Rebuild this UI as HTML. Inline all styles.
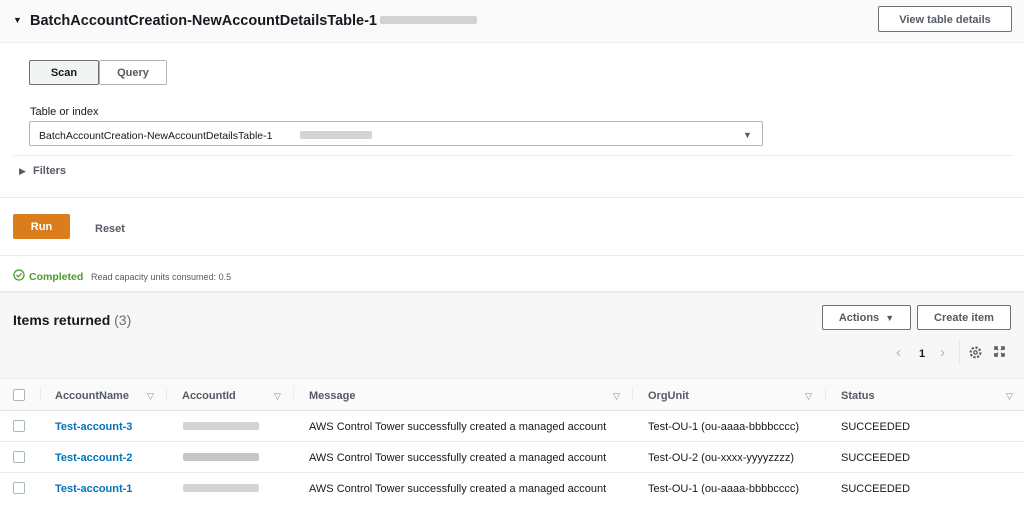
<!DOCTYPE html>
<html><head><style>
body{margin:0;width:1024px;height:518px;position:relative;overflow:hidden;background:#fff;font-family:"Liberation Sans",sans-serif;color:#16191f;font-size:11px}
.a{position:absolute;white-space:nowrap}
.t{margin-top:2px}
.b{font-weight:bold}
.btn{position:absolute;border:1px solid #687078;border-radius:2px;background:#fff;font-weight:bold;font-size:11px;color:#545b64;text-align:center;box-sizing:border-box;padding-top:2px}
.hl{position:absolute;height:1px;background:#eaeded}
.blur{position:absolute;background:#c8c8c8;height:8px;border-radius:2px;opacity:.8}
.cb{position:absolute;width:10px;height:10px;border:1px solid #aab7b8;border-radius:2px;background:#fff;left:13px}
.tri{color:#879596;font-size:9px}
.vd{position:absolute;width:1px;height:14px;background:#eaeded;top:387px}
</style></head><body>
<div class="a" style="left:0;top:0;width:1024px;height:42px;background:#fafafa"></div>
<div class="hl" style="left:0;top:42px;width:1024px"></div>
<div class="a t" style="left:13px;top:13px;font-size:9px">▼</div>
<div class="a b t" style="left:30px;top:11px;font-size:14.5px">BatchAccountCreation-NewAccountDetailsTable-1</div>
<div class="blur" style="left:380px;top:16px;width:97px"></div>
<div class="btn" style="left:878px;top:6px;width:134px;height:26px;line-height:22px">View table details</div>

<div class="btn" style="left:29px;top:60px;width:70px;height:25px;line-height:21px;background:#f2f3f3;color:#16191f">Scan</div>
<div class="btn" style="left:99px;top:60px;width:68px;height:25px;line-height:21px;border-color:#aab7b8">Query</div>
<div class="a t" style="left:30px;top:104px;font-size:11px">Table or index</div>
<div class="a" style="left:29px;top:121px;width:734px;height:25px;border:1px solid #aab7b8;border-radius:2px;box-sizing:border-box"></div>
<div class="a t" style="left:39px;top:128px;font-size:10.5px">BatchAccountCreation-NewAccountDetailsTable-1</div>
<div class="blur" style="left:300px;top:131px;width:72px"></div>
<div class="a t" style="left:743px;top:128px;font-size:9px;color:#545b64">▼</div>
<div class="hl" style="left:13px;top:155px;width:1000px"></div>
<div class="a t" style="left:19px;top:164px;font-size:9px;color:#545b64">▶</div>
<div class="a b t" style="left:33px;top:163px;color:#545b64">Filters</div>
<div class="hl" style="left:0;top:197px;width:1024px"></div>

<div class="a" style="left:13px;top:214px;width:57px;height:25px;background:#d97d1d;border-radius:2px;color:#fff;font-weight:bold;text-align:center;line-height:27px">Run</div>
<div class="a b t" style="left:95px;top:221px;color:#545b64">Reset</div>
<div class="hl" style="left:0;top:255px;width:1024px"></div>
<svg class="a" style="left:13px;top:269px" width="12" height="12" viewBox="0 0 12 12"><circle cx="6" cy="6" r="5" fill="none" stroke="#4d9a2a" stroke-width="1.3"/><path d="M3.5 6l1.8 1.8L8.6 4.3" fill="none" stroke="#4d9a2a" stroke-width="1.3"/></svg>
<div class="a b t" style="left:29px;top:269px;color:#4d9a2a;font-size:10.5px">Completed</div>
<div class="a t" style="left:91px;top:270px;color:#545b64;font-size:9px">Read capacity units consumed: 0.5</div>
<div class="a" style="left:0;top:291px;width:1024px;height:87px;background:#f7f7f7;border-top:2px solid #e9ebeb"></div>
<div class="a b t" style="left:13px;top:310px;font-size:14px">Items returned <span style="color:#687078;font-weight:normal">(3)</span></div>
<div class="btn" style="left:822px;top:305px;width:89px;height:25px;line-height:21px">Actions &nbsp;<span style="font-size:9px">▼</span></div>
<div class="btn" style="left:917px;top:305px;width:94px;height:25px;line-height:21px">Create item</div>
<div class="a" style="left:896px;top:344px;color:#aab7b8;font-size:15px">‹</div>
<div class="a b t" style="left:919px;top:346px">1</div>
<div class="a" style="left:940px;top:344px;color:#aab7b8;font-size:15px">›</div>
<div class="a" style="left:959px;top:341px;width:1px;height:24px;background:#e4e7e8"></div>
<svg class="a" style="left:969px;top:346px" width="13" height="13" viewBox="0 0 12 12"><circle cx="6" cy="6" r="4.5" fill="none" stroke="#545b64" stroke-width="2" stroke-dasharray="2 1.5"/><circle cx="6" cy="6" r="1.6" fill="none" stroke="#545b64" stroke-width="1.2"/></svg>
<svg class="a" style="left:994px;top:346px" width="11" height="11" viewBox="0 0 11 11" fill="none" stroke="#545b64" stroke-width="1.6"><path d="M1 4V1h3M7 1h3v3M10 7v3H7M4 10H1V7M1 1l3 3M10 1L7 4M10 10L7 7M1 10l3-3"/></svg>

<div class="a" style="left:0;top:378px;width:1024px;height:31px;background:#fafafa;border-top:1px solid #eaeded;border-bottom:1px solid #e1e4e4"></div>
<div class="cb" style="top:389px"></div>
<div class="vd" style="left:40px"></div><div class="vd" style="left:166px"></div><div class="vd" style="left:293px"></div><div class="vd" style="left:632px"></div><div class="vd" style="left:825px"></div>
<div class="a b t" style="left:55px;top:388px;color:#545b64">AccountName</div><div class="a tri t" style="left:147px;top:389px">▽</div>
<div class="a b t" style="left:182px;top:388px;color:#545b64">AccountId</div><div class="a tri t" style="left:274px;top:389px">▽</div>
<div class="a b t" style="left:309px;top:388px;color:#545b64">Message</div><div class="a tri t" style="left:613px;top:389px">▽</div>
<div class="a b t" style="left:648px;top:388px;color:#545b64">OrgUnit</div><div class="a tri t" style="left:805px;top:389px">▽</div>
<div class="a b t" style="left:841px;top:388px;color:#545b64">Status</div><div class="a tri t" style="left:1006px;top:389px">▽</div>

<div class="cb" style="top:420px"></div>
<div class="a b t" style="left:55px;top:419px;color:#0073bb">Test-account-3</div>
<div class="blur" style="left:183px;top:422px;width:76px"></div>
<div class="a t" style="left:309px;top:419px">AWS Control Tower successfully created a managed account</div>
<div class="a t" style="left:648px;top:419px">Test-OU-1 (ou-aaaa-bbbbcccc)</div>
<div class="a t" style="left:841px;top:419px">SUCCEEDED</div>
<div class="hl" style="left:0;top:441px;width:1024px"></div>
<div class="cb" style="top:451px"></div>
<div class="a b t" style="left:55px;top:450px;color:#0073bb">Test-account-2</div>
<div class="blur" style="left:183px;top:453px;width:76px;background:#b8b8b8"></div>
<div class="a t" style="left:309px;top:450px">AWS Control Tower successfully created a managed account</div>
<div class="a t" style="left:648px;top:450px">Test-OU-2 (ou-xxxx-yyyyzzzz)</div>
<div class="a t" style="left:841px;top:450px">SUCCEEDED</div>
<div class="hl" style="left:0;top:472px;width:1024px"></div>
<div class="cb" style="top:482px"></div>
<div class="a b t" style="left:55px;top:481px;color:#0073bb">Test-account-1</div>
<div class="blur" style="left:183px;top:484px;width:76px"></div>
<div class="a t" style="left:309px;top:481px">AWS Control Tower successfully created a managed account</div>
<div class="a t" style="left:648px;top:481px">Test-OU-1 (ou-aaaa-bbbbcccc)</div>
<div class="a t" style="left:841px;top:481px">SUCCEEDED</div>
</body></html>
